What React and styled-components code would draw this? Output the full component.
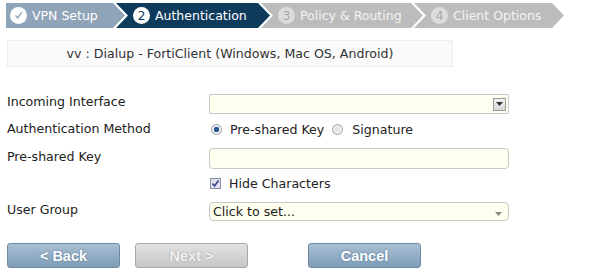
import React from "react";
import styled, { createGlobalStyle } from "styled-components";

const GlobalStyle = createGlobalStyle`
  html, body {
    margin: 0;
    padding: 0;
    background: #fff;
  }
  body {
    font-family: "DejaVu Sans", Verdana, sans-serif;
    font-size: 12px;
    color: #222;
  }
`;

const steps = [
  { label: "VPN Setup", state: "done", width: 119 },
  { label: "Authentication", state: "active", width: 154, num: 2 },
  { label: "Policy & Routing", state: "todo", width: 162, num: 3 },
  { label: "Client Options", state: "todo", width: 150, num: 4 },
];

const stepBg = {
  done: "#8fa4b8",
  active: "#0e3b5c",
  todo: "#bcbcbc",
};

const Page = styled.div`
  width: 589px;
  height: 273px;
  padding: 3px 0 0 6px;
  box-sizing: border-box;
`;

const StepBar = styled.div`
  display: flex;
  height: 25px;
`;

const Step = styled.div`
  display: flex;
  align-items: center;
  gap: 5px;
  height: 25px;
  box-sizing: border-box;
  padding-left: ${(p) => (p.$first ? "4px" : "17px")};
  margin-left: ${(p) => (p.$first ? "0" : "-9px")};
  background: ${(p) => stepBg[p.$state]};
  color: ${(p) => (p.$state === "todo" ? "#f4f4f4" : "#fff")};
  font-size: 12.5px;
  clip-path: ${(p) =>
    p.$first
      ? "polygon(0 0, calc(100% - 12px) 0, 100% 50%, calc(100% - 12px) 100%, 0 100%)"
      : "polygon(0 0, calc(100% - 12px) 0, 100% 50%, calc(100% - 12px) 100%, 0 100%, 12px 50%)"};
`;

const StepCircle = styled.span`
  width: 17px;
  height: 17px;
  border-radius: 50%;
  display: flex;
  align-items: center;
  justify-content: center;
  background: ${(p) => (p.$state === "todo" ? "#dcdcdc" : "#fff")};
  color: ${(p) =>
    p.$state === "active" ? "#0e3b5c" : p.$state === "todo" ? "#a8a8a8" : "#8fa4b8"};
  font-size: 12px;
  line-height: 1;
`;

const Header = styled.div`
  margin: 12px 0 0 1px;
  width: 446px;
  height: 27px;
  box-sizing: border-box;
  background: #fafafa;
  border: 1px solid #eeeeee;
  display: flex;
  align-items: center;
  justify-content: center;
  font-size: 12.6px;
  color: #333;
`;

const Form = styled.div`
  margin-top: 27px;
  display: grid;
  grid-template-columns: 202px 301px;
  grid-auto-rows: 27px;
  padding-left: 1px;
`;

const Label = styled.div`
  line-height: 15px;
  font-size: 12.6px;
  color: #222;
`;

const Field = styled.div`
  display: flex;
  align-items: flex-start;
  font-size: 12.6px;
  line-height: 15px;
`;

const Inline = styled.div`
  display: flex;
  align-items: center;
  height: 16px;
`;

const Box = styled.div`
  width: 300px;
  height: ${(p) => p.$h}px;
  box-sizing: border-box;
  background: #fffff0;
  border: 1px solid #c8c8c8;
  border-radius: ${(p) => (p.$square ? "1px" : "4px")};
  display: flex;
  align-items: center;
  justify-content: space-between;
  padding: 0 2px 0 3px;
  font-size: 12.6px;
  color: #222;
`;

const DropButton = styled.span`
  width: 13px;
  height: 13px;
  box-sizing: border-box;
  border: 1px solid #9a9a9a;
  background: linear-gradient(#f4f4f4, #d8d8d8);
  display: flex;
  align-items: center;
  justify-content: center;
`;

const Radio = styled.span`
  width: 11px;
  height: 11px;
  box-sizing: border-box;
  border-radius: 50%;
  border: 1px solid #a0a0a0;
  background: ${(p) =>
    p.$on
      ? "radial-gradient(circle, #2a5a8c 0 2.5px, #e8eef4 3px)"
      : "radial-gradient(circle, #e0e0e0, #f8f8f8)"};
  margin: ${(p) => p.$m};
`;

const Check = styled.span`
  width: 11px;
  height: 11px;
  box-sizing: border-box;
  border: 1px solid #8a8aa0;
  background: #dfe3f0;
  display: flex;
  align-items: center;
  justify-content: center;
  margin: 0 8px 0 1px;
`;

const Buttons = styled.div`
  display: flex;
  margin-top: 14px;
  padding-left: 1px;
`;

const Button = styled.div`
  width: 113px;
  height: 25px;
  box-sizing: border-box;
  margin-right: ${(p) => p.$mr}px;
  border-radius: 3px;
  border: 1px solid ${(p) => (p.$disabled ? "#a8a8a8" : "#6f8aa3")};
  background: ${(p) =>
    p.$disabled
      ? "linear-gradient(#e2e2e2, #c6c6c6)"
      : "linear-gradient(#a8bfd3, #7f9db8)"};
  color: ${(p) => (p.$disabled ? "#f2f2f2" : "#fff")};
  font-family: "Liberation Sans", Arial, sans-serif;
  font-weight: bold;
  font-size: 14.5px;
  display: flex;
  align-items: center;
  justify-content: center;
  text-shadow: 0 0 2px ${(p) => (p.$disabled ? "#999" : "#56708a")};
`;

const CheckMark = () => (
  <svg width="11" height="11" viewBox="0 0 11 11">
    <path d="M2.5 5.5 L4.8 8 L8.8 2.2" fill="none" stroke="currentColor" strokeWidth="1.4" />
  </svg>
);

const Caret = ({ color = "#333" }) => (
  <svg width="7" height="4" viewBox="0 0 7 4">
    <path d="M0 0 H7 L3.5 4 Z" fill={color} />
  </svg>
);

export default function App() {
  return (
    <Page>
      <GlobalStyle />
      <StepBar>
        {steps.map((s, i) => (
          <Step key={s.label} $state={s.state} $first={i === 0} style={{ width: s.width }}>
            <StepCircle $state={s.state}>{s.num ? s.num : <CheckMark />}</StepCircle>
            {s.label}
          </Step>
        ))}
      </StepBar>
      <Header>vv : Dialup - FortiClient (Windows, Mac OS, Android)</Header>
      <Form>
        <Label>Incoming Interface</Label>
        <Field>
          <Box $h={20} $square>
            <span />
            <DropButton>
              <Caret />
            </DropButton>
          </Box>
        </Field>

        <Label>Authentication Method</Label>
        <Field>
          <Inline>
            <Radio $on $m="0 8px 0 2px" />
            Pre-shared Key
            <Radio $m="0 9px 0 8px" />
            Signature
          </Inline>
        </Field>

        <Label style={{ marginTop: 1 }}>Pre-shared Key</Label>
        <Field>
          <Box $h={21} />
        </Field>

        <Label />
        <Field>
          <Inline>
            <Check>
              <svg width="9" height="9" viewBox="0 0 9 9">
                <path d="M1.5 4.5 L3.6 7 L7.5 1.5" fill="none" stroke="#3a3f8a" strokeWidth="1.6" />
              </svg>
            </Check>
            Hide Characters
          </Inline>
        </Field>

        <Label>User Group</Label>
        <Field>
          <Box $h={19}>
            Click to set...
            <span style={{ marginRight: 4 }}>
              <Caret color="#888" />
            </span>
          </Box>
        </Field>
      </Form>
      <Buttons>
        <Button $mr={15}>&lt; Back</Button>
        <Button $mr={60} $disabled>
          Next &gt;
        </Button>
        <Button $mr={0}>Cancel</Button>
      </Buttons>
    </Page>
  );
}
